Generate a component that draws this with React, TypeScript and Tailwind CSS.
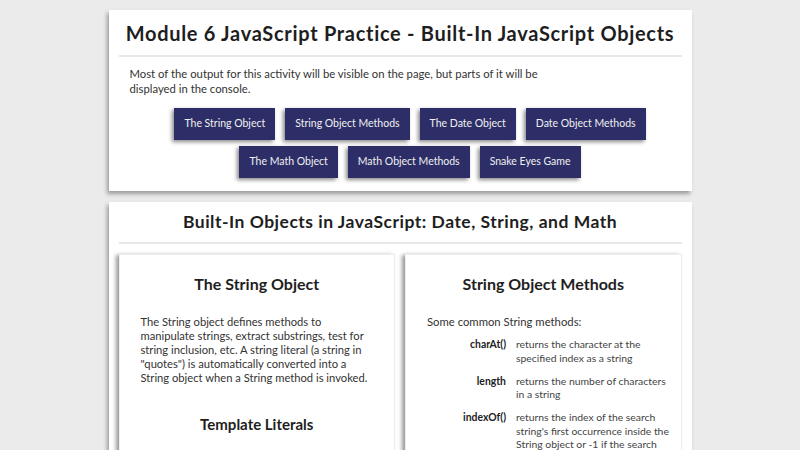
const NAV = [
  ['The String Object', 'String Object Methods', 'The Date Object', 'Date Object Methods'],
  ['The Math Object', 'Math Object Methods', 'Snake Eyes Game'],
];

const METHODS = [
  ['charAt()', 'returns the character at the specified index as a string'],
  ['length', 'returns the number of characters in a string'],
  ['indexOf()', "returns the index of the search string's first occurrence inside the String object or -1 if the search string is not found"],
];

export default function App() {
  return (
    <div className="h-[450px] overflow-hidden bg-[#ebebeb] pt-[10px] font-['Lato',sans-serif] text-[#222]">
      {/* Header card */}
      <div className="mx-auto w-[583px] bg-white px-[10px] pb-[13px] shadow-[-2px_3px_4px_#9c9c9c]">
        <h1 className="pt-[9px] pb-[8px] text-center text-[20px] font-bold leading-[28px] tracking-[0.7px] text-[#1e1e1e]">
          Module 6 JavaScript Practice - Built-In JavaScript Objects
        </h1>
        <div className="h-[2px] bg-[#e8e8e8]" />
        <p className="mt-[9px] ml-[11px] w-[440px] text-[11.3px] leading-[15px] text-[#333]">
          Most of the output for this activity will be visible on the page, but parts of it will be displayed in the console.
        </p>
        <div className="mt-[12px] flex flex-col items-center gap-[6px] pl-[20px]">
          {NAV.map((row, i) => (
            <div key={i} className="flex gap-[10px]">
              {row.map((label) => (
                <button
                  key={label}
                  className="h-[32px] bg-[#2d2e67] px-[10px] text-[10.5px] text-[#f0f0f0] shadow-[-2px_2px_4px_#8a8a8a]"
                >
                  {label}
                </button>
              ))}
            </div>
          ))}
        </div>
      </div>

      {/* Content card */}
      <div className="mx-auto mt-[11px] w-[583px] bg-white px-[10px] pb-[20px] shadow-[-2px_3px_4px_#9c9c9c]">
        <h2 className="pt-[8px] pb-[8px] text-center text-[17.5px] font-bold leading-[24px] tracking-[0.5px] text-[#1e1e1e]">
          Built-In Objects in JavaScript: Date, String, and Math
        </h2>
        <div className="h-[2px] bg-[#e8e8e8]" />
        <div className="mt-[10px] grid grid-cols-2 gap-[10px]">
          <div className="h-[300px] border border-[#eeeeee] bg-white pl-[21px] pr-[18px] shadow-[-3px_1px_4px_#9a9a9a]">
            <h3 className="pt-[18px] pr-[3px] text-center text-[16px] font-bold leading-[22px] text-[#1e1e1e]">The String Object</h3>
            <p className="mt-[20px] text-[11.2px] leading-[14px] text-[#333]">
              The String object defines methods to manipulate strings, extract substrings, test for string inclusion, etc. A string literal (a string in "quotes") is automatically converted into a String object when a String method is invoked.
            </p>
            <h3 className="mt-[29px] pr-[3px] text-center text-[15px] font-bold leading-[20px] text-[#1e1e1e]">Template Literals</h3>
          </div>
          <div className="h-[300px] border border-[#eeeeee] bg-white pl-[21px] pr-[2px] shadow-[-3px_1px_4px_#9a9a9a]">
            <h3 className="pt-[18px] pr-[19px] text-center text-[16px] font-bold leading-[22px] text-[#1e1e1e]">String Object Methods</h3>
            <p className="mt-[20px] text-[11.3px] leading-[14px] text-[#333]">Some common String methods:</p>
            <dl className="mt-[9px] flex flex-col gap-[9.5px] text-[10.4px] leading-[13.5px]">
              {METHODS.map(([term, desc]) => (
                <div key={term} className="flex">
                  <dt className="w-[79px] shrink-0 text-right font-bold text-[#222]">{term}</dt>
                  <dd className="ml-[10px] w-[160px] text-[#444]">{desc}</dd>
                </div>
              ))}
            </dl>
          </div>
        </div>
      </div>
    </div>
  );
}
